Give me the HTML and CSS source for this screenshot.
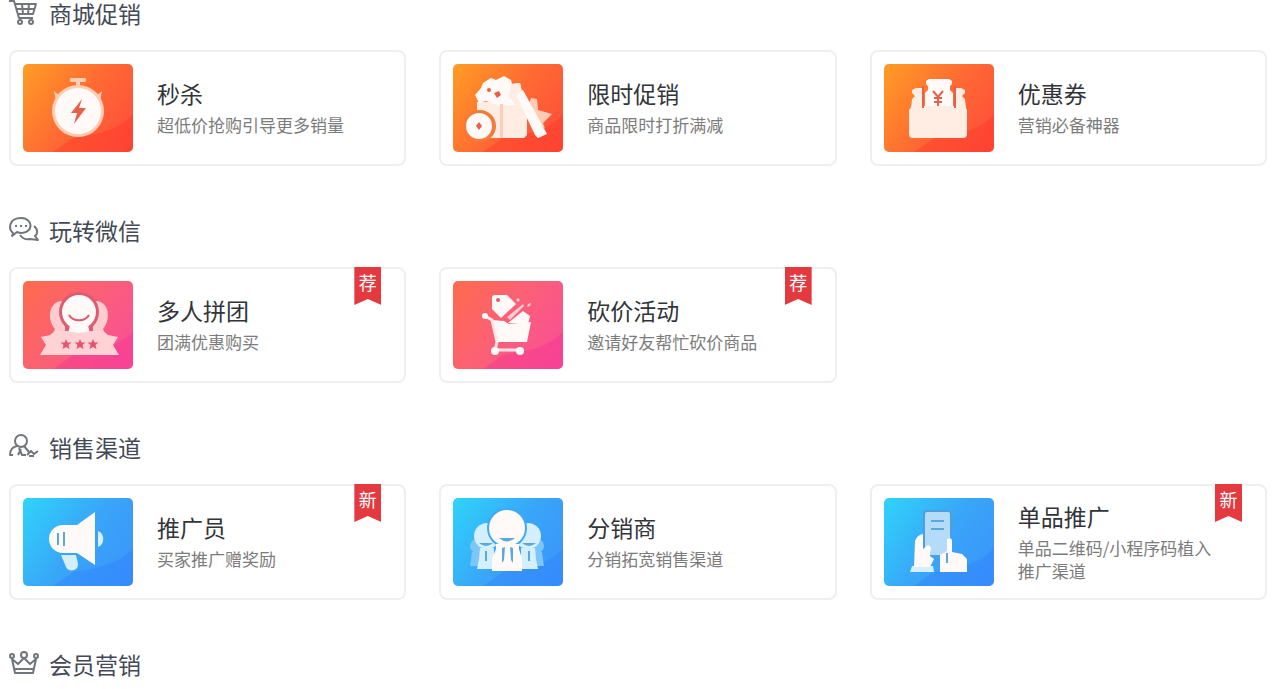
FILE: index.html
```html
<!DOCTYPE html>
<html lang="zh-CN">
<head>
    <meta charset="UTF-8">
    <meta name="viewport" content="width=device-width, initial-scale=1.0">
    <title>营销中心</title>
    <link rel="stylesheet" href="styles.css">
</head>
<body>

<main class="page">
    <section class="group">
        <h2 class="group-title">
            <svg class="group-icon" viewBox="0 0 30 26">
                <path d="M0 1h5l5 17h14M6 4h21l-3 10H9M13 4l1 10M20 4l-1 10M7 9h19"/>
                <circle cx="11" cy="22" r="2"/>
                <circle cx="22" cy="22" r="2"/>
            </svg>
            商城促销
        </h2>
        <div class="cards">
            <a class="card" href="#">
                <svg class="tile orange" viewBox="0 0 110 88">
                    <path class="wave" d="M110 50C98 64 80 70 50 74L30 88h80z"/>
                    <g class="soft">
                        <circle cx="55" cy="47" r="26"/>
                        <rect x="47" y="14" width="16" height="4" rx="1"/>
                        <rect x="53" y="17" width="4" height="6"/>
                        <path d="M31 27l6 5-4 5zM79 27l-6 5 4 5z"/>
                    </g>
                    <circle class="solid" cx="55" cy="47" r="23"/>
                    <path class="mark" d="M59 35L48 49h6l-3 11 12-16h-7z"/>
                </svg>
                <div class="info">
                    <h3>秒杀</h3>
                    <p>超低价抢购引导更多销量</p>
                </div>
            </a>
            <a class="card" href="#">
                <svg class="tile orange" viewBox="0 0 110 88">
                    <path class="wave" d="M110 50C98 64 80 70 50 74L30 88h80z"/>
                    <path class="pale" d="M24 38h50v33l-3 3H24z"/>
                    <path class="solid" d="M22 31l6-7 2-5 8-5 5 2 8-4 7 4 1 4 8-1 2 9 6 12-29 2-13-5-7 2z"/>
                    <path class="pale" d="M58 20l9-1 2 9 4 10-10 4-7-10z"/>
                    <circle class="mark" cx="36" cy="26" r="2"/>
                    <path class="mark" d="M41 29l5-2 2 4-4 3z"/>
                    <path class="soft" d="M47 40h3v34h-3z"/>
                    <path class="soft" d="M78 34l6 1 1 11 14 4-9 9 2 6-18-20z"/>
                    <path class="solid" d="M63 31l7-5 24 44-9 4-3-3z"/>
                    <circle class="ring" cx="27" cy="62" r="16"/>
                    <circle class="solid" cx="26" cy="62" r="13"/>
                    <path class="mark" d="M26 58l3 4-3 4-3-4z"/>
                </svg>
                <div class="info">
                    <h3>限时促销</h3>
                    <p>商品限时打折满减</p>
                </div>
            </a>
            <a class="card" href="#">
                <svg class="tile orange" viewBox="0 0 110 88">
                    <path class="wave" d="M110 50C98 64 80 70 50 74L30 88h80z"/>
                    <path class="pale" d="M28 26l4-2h6v20H27l1-9 3-3-3-3zM81 26l-4-2h-5v20h10l-1-9-3-3 3-3z"/>
                    <path class="solid" d="M42 17l3-2h20l3 2v3l-2 2v4l3 3v16H41V29l3-3v-4l-2-2z"/>
                    <path class="pale" d="M28 42h53l2 4v24q0 4-4 4H29q-4 0-4-4V46z"/>
                    <path class="mark-line" d="M39 22v22M71 22v22"/>
                    <path class="mark-line" d="M49 27l5 6 5-6M54 32v10M50 34h8M50 38h8"/>
                </svg>
                <div class="info">
                    <h3>优惠券</h3>
                    <p>营销必备神器</p>
                </div>
            </a>
        </div>
    </section>

    <section class="group">
        <h2 class="group-title">
            <svg class="group-icon" viewBox="0 0 30 26">
                <path d="M4 16C-1 12 0 1 12 1s13 14 1 15c-2 0-3 0-5-1l-5 4zM25 9c5 4 3 9 1 10l3 4-8-1c-4 1-7 0-10-4"/>
                <path class="dots" d="M6 9h2M11 9h2M16 9h2"/>
            </svg>
            玩转微信
        </h2>
        <div class="cards">
            <a class="card" href="#">
                <svg class="tile pink" viewBox="0 0 110 88">
                    <path class="wave" d="M110 50C98 64 80 70 50 74L30 88h80z"/>
                    <path class="soft" d="M40 20c-15 0-16 19-8 28l-5 10h20V28zM72 20c15 0 16 19 8 28l5 10H65V28z"/>
                    <circle class="ring" cx="56" cy="31" r="20"/>
                    <path class="ring" d="M42 44h28v14H42z"/>
                    <circle class="solid" cx="56" cy="31" r="17"/>
                    <path class="solid" d="M47 44h18l3 14H44z"/>
                    <path class="mark-line" d="M46 34c4 7 16 7 20 0"/>
                    <path class="pale" d="M18 56l9-2 5-4h12l12 2 12-2h12l5 4 10 2-5 8 6 10H17l6-10z"/>
                    <g class="mark">
                        <path id="star" d="M43 58l1.500 3.500h4l-3 2.500 1 4-3.500-2-3.500 2 1-4-3-2.500h4z"/>
                        <use href="#star" x="14"/>
                        <use href="#star" x="27"/>
                    </g>
                </svg>
                <div class="info">
                    <h3>多人拼团</h3>
                    <p>团满优惠购买</p>
                </div>
                <span class="ribbon">荐</span>
            </a>
            <a class="card" href="#">
                <svg class="tile pink" viewBox="0 0 110 88">
                    <path class="wave" d="M110 50C98 64 80 70 50 74L30 88h80z"/>
                    <path class="solid" d="M39 17q0-3 3-3h12l9 9-15 14-9-9z"/>
                    <circle class="mark" cx="45" cy="19" r="2"/>
                    <path class="soft" d="M54 36l16-13 1 2-14 14zM65 17l2 2-2 2-2-2zM75 23l3-1-1 3-3 1z"/>
                    <path class="solid" d="M55 42l15-12 7 5-2 8z"/>
                    <path class="solid" d="M39 39l12 1 5 3 22-2-4 20H44z"/>
                    <path class="cart-frame" d="M32 35l7 4 5 22-2 8h25"/>
                    <circle class="solid" cx="32" cy="35" r="3"/>
                    <circle class="solid" cx="42" cy="70" r="4"/>
                    <circle class="solid" cx="67" cy="70" r="4"/>
                </svg>
                <div class="info">
                    <h3>砍价活动</h3>
                    <p>邀请好友帮忙砍价商品</p>
                </div>
                <span class="ribbon">荐</span>
            </a>
        </div>
    </section>

    <section class="group">
        <h2 class="group-title">
            <svg class="group-icon" viewBox="0 0 30 26">
                <circle cx="12" cy="7" r="6"/>
                <path d="M8 12c-5 1-7 4-7 9h3M10 14l3 7h4M15 12l5 6M9 21l3-6M18 21l4-4 3 3 4-3M20 22h5"/>
            </svg>
            销售渠道
        </h2>
        <div class="cards">
            <a class="card" href="#">
                <svg class="tile blue" viewBox="0 0 110 88">
                    <path class="wave" d="M110 50C98 64 80 70 50 74L30 88h80z"/>
                    <path class="pale" d="M75 33c7 2 7 14 0 16z"/>
                    <path class="pale" d="M38 57h15l2 9c0 8-10 8-12 3z"/>
                    <path class="solid" d="M40 27h14l18-13v53L54 55H40a14 14 0 0 1 0-28z"/>
                    <path class="mark-line" d="M35 35v12M41 34v14"/>
                </svg>
                <div class="info">
                    <h3>推广员</h3>
                    <p>买家推广赠奖励</p>
                </div>
                <span class="ribbon">新</span>
            </a>
            <a class="card" href="#">
                <svg class="tile blue" viewBox="0 0 110 88">
                    <path class="wave" d="M110 50C98 64 80 70 50 74L30 88h80z"/>
                    <g class="faint">
                        <circle cx="24" cy="48" r="7"/>
                        <circle cx="84" cy="48" r="7"/>
                        <path d="M19 54h9v14H17zM89 54h-9v14h11z"/>
                    </g>
                    <g class="pale">
                        <circle cx="34" cy="38" r="13"/>
                        <circle cx="75" cy="38" r="13"/>
                        <path d="M27 50h14v21H24l2-10zM82 50H68v21h17l-2-10z"/>
                    </g>
                    <path class="mark" d="M26 45h14q-7 6-14 0zM69 45h14q-7 6-14 0zM32 53h2v10h-2zM75 53h2v10h-2z"/>
                    <circle class="ring" cx="54" cy="30" r="20"/>
                    <circle class="solid" cx="54" cy="30" r="18"/>
                    <path class="solid" d="M43 46h23v5l3 10v12H39V61l4-10z"/>
                    <path class="mark" d="M46 40h16q-8 7-16 0zM49 50l3-1-1 13-2 3zM57 49l3 1v15l-2-3z"/>
                </svg>
                <div class="info">
                    <h3>分销商</h3>
                    <p>分销拓宽销售渠道</p>
                </div>
            </a>
            <a class="card" href="#">
                <svg class="tile blue" viewBox="0 0 110 88">
                    <path class="wave" d="M110 50C98 64 80 70 50 74L30 88h80z"/>
                    <rect class="phone" x="40" y="13" width="27" height="45" rx="3"/>
                    <path class="mark-line" d="M47 23h13M47 31h13"/>
                    <path class="pale" d="M26 74l2-6h21l1 6z"/>
                    <path class="solid" d="M30 69l1-26q2-6 8-7v15l5-4q5 2 2 7v4l4 3-4 8zM56 74V57l7-4V41q4-2 5 1v12l10 2 5 5v13z"/>
                    <path class="mark-line" d="M63 55v10"/>
                </svg>
                <div class="info">
                    <h3>单品推广</h3>
                    <p>单品二维码/小程序码植入推广渠道</p>
                </div>
                <span class="ribbon">新</span>
            </a>
        </div>
    </section>

    <section class="group">
        <h2 class="group-title">
            <svg class="group-icon" viewBox="0 0 30 26">
                <path d="M3 8l3 14h18l3-14-6 5-6-6-6 6zM6 18h18"/>
                <circle cx="3" cy="5" r="2"/>
                <circle cx="15" cy="4" r="3"/>
                <circle cx="27" cy="5" r="2"/>
            </svg>
            会员营销
        </h2>
    </section>
</main>

</body>
</html>
```
FILE: styles.css
```css
body {
    margin: 0;
    font-family: "Noto Sans CJK SC", sans-serif;
    color: #333;
    background-color: #fff;
}
h2, h3, p {
    margin: 0;
    font-weight: normal;
}
.page {
    display: flex;
    flex-direction: column;
    gap: 51px;
    padding: 0 11px 0 9px;
}
.group {
    display: flex;
    flex-direction: column;
    gap: 24px;
}
.group-title {
    display: flex;
    align-items: center;
    gap: 10px;
    font-size: 23px;
    line-height: 26px;
    color: #434956;
}
.group-icon {
    width: 30px;
    height: 26px;
    fill: none;
    stroke: #72767c;
    stroke-width: 2;
    stroke-linejoin: round;
}

/* cards */
.cards {
    display: grid;
    grid-template-columns: repeat(3, 1fr);
    gap: 33px;
}
.card {
    position: relative;
    display: flex;
    align-items: center;
    gap: 24px;
    padding: 12px;
    border: 2px solid #eeeff0;
    border-radius: 8px;
    color: inherit;
    text-decoration: none;
}
.card:hover {
    border-color: #d8dadd;
}
.info {
    flex: 1;
    padding: 0 32px 2px 0;
}
.info h3 {
    margin-bottom: 5px;
    font-size: 23px;
    line-height: 30px;
    color: #32343a;
}
.info p {
    font-size: 17px;
    line-height: 23px;
    color: #7c7c7c;
}
.ribbon {
    position: absolute;
    top: -2px;
    right: 23px;
    width: 27px;
    height: 38px;
    font-size: 18px;
    line-height: 30px;
    text-align: center;
    color: #fff;
    background-color: #e3393f;
    clip-path: polygon(0 0, 100% 0, 100% 100%, 50% 84%, 0 100%);
}

/* picture tiles */
.tile {
    flex: none;
    width: 110px;
    height: 88px;
    border-radius: 5px;
}
.orange {
    --mark: #e8604a;
    --soft: #ffcdb5;
    --pale: #ffece2;
    --ring: #f47a3a;
    --wave: #ff3428;
    background: linear-gradient(125deg, #ff9d24, #ff6a33 50%, #ff4a3c);
}
.pink {
    --mark: #e4566f;
    --soft: #ffccd0;
    --pale: #ffd3d6;
    --ring: #dc5c72;
    --wave: #f42f92;
    background: linear-gradient(125deg, #ff6c4c, #fb5f78 50%, #f94d9c);
}
.blue {
    --mark: #5aa9dc;
    --soft: #bfe6ff;
    --pale: #d4f0ff;
    --ring: #40a9f4;
    --wave: #2f7ffc;
    background: linear-gradient(125deg, #2fd4fa, #39a6f8 50%, #3b92fb);
}
.wave {
    fill: var(--wave);
    opacity: 0.4;
}
.solid {
    fill: #fffaf8;
}
.soft {
    fill: var(--soft);
}
.pale {
    fill: var(--pale);
}
.faint {
    fill: #7cc6fb;
}
.ring {
    fill: var(--ring);
}
.mark {
    fill: var(--mark);
}
.mark-line {
    fill: none;
    stroke: var(--mark);
    stroke-width: 2;
}
.cart-frame {
    fill: none;
    stroke: #ffe6ea;
    stroke-width: 3;
}
.phone {
    fill: #b4dcf8;
    stroke: #4f9fdc;
    stroke-width: 2;
}
```
